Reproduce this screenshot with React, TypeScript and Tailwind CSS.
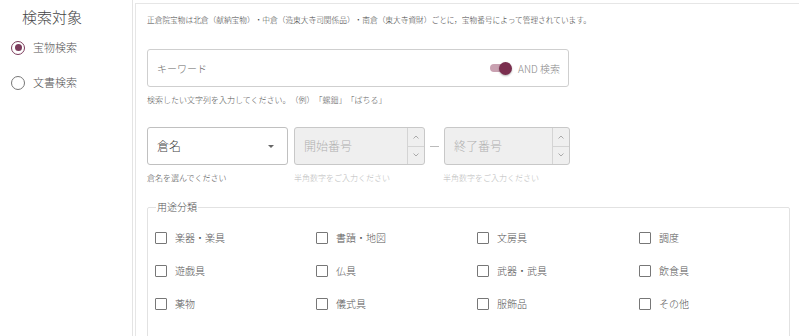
const font = { fontFamily: '"Noto Sans CJK JP", "Noto Sans", sans-serif' };

const categories = [
  "楽器・楽具",
  "書蹟・地図",
  "文房具",
  "調度",
  "遊戯具",
  "仏具",
  "武器・武具",
  "飲食具",
  "薬物",
  "儀式具",
  "服飾品",
  "その他",
];

function Radio({ label, checked }: { label: string; checked?: boolean }) {
  return (
    <label className="flex h-[35px] items-center gap-[8px] text-[11px] text-[#555]">
      <span
        className={`flex h-[14px] w-[14px] items-center justify-center rounded-full border-[1.5px] ${
          checked ? "border-[#7b3b5b]" : "border-[#777]"
        }`}
      >
        {checked && <span className="h-[7px] w-[7px] rounded-full bg-[#7b3b5b]" />}
      </span>
      {label}
    </label>
  );
}

function Chevron({ up }: { up?: boolean }) {
  return (
    <svg width="6" height="4" viewBox="0 0 6 4" className="text-[#aaa]">
      <path d={up ? "M0.5 3.5 L3 1 L5.5 3.5" : "M0.5 0.5 L3 3 L5.5 0.5"} fill="none" stroke="currentColor" strokeWidth="1" />
    </svg>
  );
}

function NumberBox({ placeholder, width }: { placeholder: string; width: string }) {
  return (
    <div
      className={`flex h-[38px] ${width} overflow-hidden rounded-[3px] border border-[#c8c8c8] bg-[#efefef]`}
    >
      <div className="flex flex-1 items-center pl-[9px] text-[12px] text-[#b0b0b0]">{placeholder}</div>
      <div className="flex w-[17px] flex-col border-l border-[#d4d4d4]">
        <div className="flex flex-1 items-center justify-center border-b border-[#d4d4d4]">
          <Chevron up />
        </div>
        <div className="flex flex-1 items-center justify-center">
          <Chevron />
        </div>
      </div>
    </div>
  );
}

export default function App() {
  return (
    <div
      className="flex h-[336px] w-[799px] overflow-hidden bg-white font-light [text-spacing-trim:space-all]"
      style={font}
    >
      <aside className="w-[133px] shrink-0 border-r border-[#e4e4e4] pl-[11px]">
        <h2 className="pl-[11px] pt-[6px] text-[15px] leading-[22px] text-[#444]">検索対象</h2>
        <div className="mt-[2px]">
          <Radio label="宝物検索" checked />
          <Radio label="文書検索" />
        </div>
      </aside>

      <main className="ml-[2px] mt-[3px] flex-1 border-l border-t border-[#e6e6e6] pl-[11px] pr-[10px]">
        <p className="pt-[10px] text-[7.7px] leading-[12px] text-[#444]">
          正倉院宝物は北倉（献納宝物）・中倉（造東大寺司関係品）・南倉（東大寺資財）ごとに，宝物番号によって管理されています。
        </p>

        <div className="mt-[23px] flex h-[38px] w-[422px] items-center justify-between rounded-[3px] border border-[#cfcfcf] pl-[9px] pr-[8px]">
          <span className="text-[10px] text-[#666]">キーワード</span>
          <div className="flex items-center gap-[6px]">
            <span className="relative flex h-[12px] w-[22px] items-center">
              <span className="h-[8px] w-[20px] rounded-full bg-[#c9a1b1]" />
              <span className="absolute right-0 h-[13px] w-[13px] rounded-full bg-[#7a2e4e] shadow-[0_1px_2px_rgba(0,0,0,0.3)]" />
            </span>
            <span className="text-[10px] text-[#888]">AND 検索</span>
          </div>
        </div>
        <p className="mt-[8px] text-[8px] leading-[10px] text-[#555]">
          検索したい文字列を入力してください。（例）「螺鈿」「ばちる」
        </p>

        <div className="mt-[22px] flex items-center">
          <div className="flex h-[38px] w-[141px] items-center justify-between rounded-[3px] border border-[#c0c0c0] pl-[9px] pr-[13px]">
            <span className="text-[12px] text-[#444]">倉名</span>
            <span className="h-0 w-0 border-x-[3px] border-t-[3px] border-x-transparent border-t-[#666]" />
          </div>
          <div className="ml-[6px]">
            <NumberBox placeholder="開始番号" width="w-[131px]" />
          </div>
          <span className="mx-[5px] h-px w-[9px] bg-[#bbb]" />
          <NumberBox placeholder="終了番号" width="w-[126px]" />
        </div>
        <div className="mt-[8px] flex text-[8px] leading-[10px]">
          <span className="w-[147px] text-[#555]">倉名を選んでください</span>
          <span className="w-[149px] text-[#bbb]">半角数字をご入力ください</span>
          <span className="text-[#bbb]">半角数字をご入力ください</span>
        </div>

        <fieldset className="mt-[18px] w-[643px] rounded-[2px] border border-[#e2e2e2] pb-[40px] pl-[7px]">
          <legend className="ml-[1px] px-[1px] text-[10px] leading-[12px] text-[#555]">用途分類</legend>
          <div className="mt-[16px] grid grid-cols-[161px_161px_162px_1fr] gap-y-[16px]">
            {categories.map((c) => (
              <label key={c} className="flex h-[17px] items-center gap-[8px] text-[10px] text-[#555]">
                <span className="h-[12px] w-[12px] rounded-[1px] border border-[#777]" />
                {c}
              </label>
            ))}
          </div>
        </fieldset>
      </main>
    </div>
  );
}
